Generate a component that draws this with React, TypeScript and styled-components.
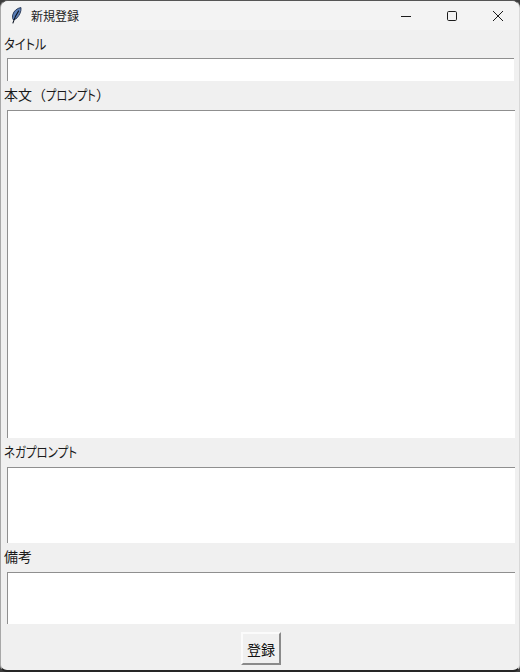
import React from 'react';
import styled, { createGlobalStyle } from 'styled-components';

const GlobalStyle = createGlobalStyle`
  html, body {
    margin: 0;
    padding: 0;
    background: #3d3d3d;
  }
  body {
    font-family: "Noto Sans CJK JP", "Noto Sans", sans-serif;
    color: #1a1a1a;
  }
`;

const Feather = () => (
  <svg width="11" height="17" viewBox="0 0 11 17">
    <path d="M10 0.6C6.4 1 2.8 3.8 1.8 7.6c-.5 1.9-.4 3.6.2 4.9 1.3.2 2.8-.4 4-1.6C8.6 8.2 10.4 4.4 10 .6z" fill="#5b7fb8" stroke="#24334f" strokeWidth="0.9" />
    <path d="M7.8 3.6C5.6 6.6 3.4 11 1.8 16.4" fill="none" stroke="#0e1624" strokeWidth="1.1" />
  </svg>
);

const TitleIcon = ({ kind }: { kind: 'min' | 'max' | 'close' }) => (
  <svg width="12" height="12" viewBox="0 0 12 12" fill="none" stroke="#1c1c1c" strokeWidth="1">
    {kind === 'min' && <path d="M1 6.5h10" />}
    {kind === 'max' && <rect x="1.5" y="1.5" width="9" height="9" rx="1.2" />}
    {kind === 'close' && <path d="M1 1l10 10M11 1L1 11" />}
  </svg>
);

export default function App() {
  return (
    <>
      <GlobalStyle />
      <Window>
        <TitleBar>
          <AppIcon><Feather /></AppIcon>
          <Title>新規登録</Title>
          <Controls>
            <ControlButton><TitleIcon kind="min" /></ControlButton>
            <ControlButton><TitleIcon kind="max" /></ControlButton>
            <ControlButton><TitleIcon kind="close" /></ControlButton>
          </Controls>
        </TitleBar>
        <Label><Kana $width={42} $scale={0.875}>タイトル</Kana></Label>
        <EntryRow><Entry type="text" /></EntryRow>
        <Label>本文（<Kana $width={50} $scale={0.8}>プロンプト</Kana>）</Label>
        <TextRow><TextBox $height={328} /></TextRow>
        <Label><Kana $width={73} $scale={0.82}>ネガプロンプト</Kana></Label>
        <TextRow><TextBox $height={76} /></TextRow>
        <Label>備考</Label>
        <TextRow><TextBox $height={52} /></TextRow>
        <Footer>
          <SubmitButton>登録</SubmitButton>
        </Footer>
      </Window>
    </>
  );
}

const Window = styled.div`
  width: 520px;
  height: 672px;
  box-sizing: border-box;
  display: flex;
  flex-direction: column;
  overflow: hidden;
  background: #f0f0f0;
  border-top: 1px solid #555;
  border-left: 1px solid #a8a8a8;
  border-right: 1px solid #d8d8d8;
  border-bottom: 2px solid #262626;
  border-radius: 8px 8px 7px 7px;
`;

const TitleBar = styled.div`
  height: 29px;
  flex: none;
  display: flex;
  align-items: center;
  background: #f3f3f3;
`;

const AppIcon = styled.div`
  width: 11px;
  height: 17px;
  margin-left: 10px;
  display: flex;
`;

const Title = styled.div`
  margin-left: 9px;
  font-size: 12px;
  line-height: 16px;
  color: #222;
`;

const Controls = styled.div`
  margin-left: auto;
  margin-right: -2px;
  display: flex;
`;

const ControlButton = styled.div`
  width: 46px;
  height: 29px;
  display: flex;
  align-items: center;
  justify-content: center;
`;

const Label = styled.div`
  height: 29px;
  flex: none;
  padding-left: 3px;
  font-size: 14px;
  line-height: 27px;
  white-space: nowrap;
  color: #1a1a1a;
`;

const Kana = styled.span<{ $width: number; $scale: number }>`
  display: inline-block;
  width: ${(p) => p.$width}px;
  font-feature-settings: 'palt';
  transform: scaleX(${(p) => p.$scale});
  transform-origin: left center;
`;

const EntryRow = styled.div`
  height: 23px;
  flex: none;
  margin-top: -1px;
  padding-left: 6px;
  display: flex;
`;

const TextRow = styled.div`
  flex: none;
  padding-left: 6px;
  display: flex;
`;

const Entry = styled.input`
  width: 507px;
  height: 23px;
  box-sizing: border-box;
  margin: 0;
  padding: 0;
  background: #fff;
  border: 0;
  border-top: 1px solid #8f8f8f;
  border-left: 1px solid #8f8f8f;
  border-radius: 0;
  outline: none;
`;

const TextBox = styled.textarea<{ $height: number }>`
  width: 508px;
  height: ${(p) => p.$height}px;
  box-sizing: border-box;
  display: block;
  margin: 0;
  padding: 0;
  background: #fff;
  border: 0;
  border-top: 1px solid #8f8f8f;
  border-left: 1px solid #8f8f8f;
  border-radius: 0;
  outline: none;
  resize: none;
`;

const Footer = styled.div`
  flex: 1;
  display: flex;
  justify-content: center;
  padding-top: 8px;
`;

const SubmitButton = styled.button`
  width: 40px;
  height: 33px;
  box-sizing: border-box;
  margin: 0 0 0 2px;
  padding: 0;
  background: #f0f0f0;
  border: 2px solid;
  border-color: #fbfbfb #8a8a8a #8a8a8a #fbfbfb;
  font-family: inherit;
  font-size: 14px;
  color: #111;
`;
